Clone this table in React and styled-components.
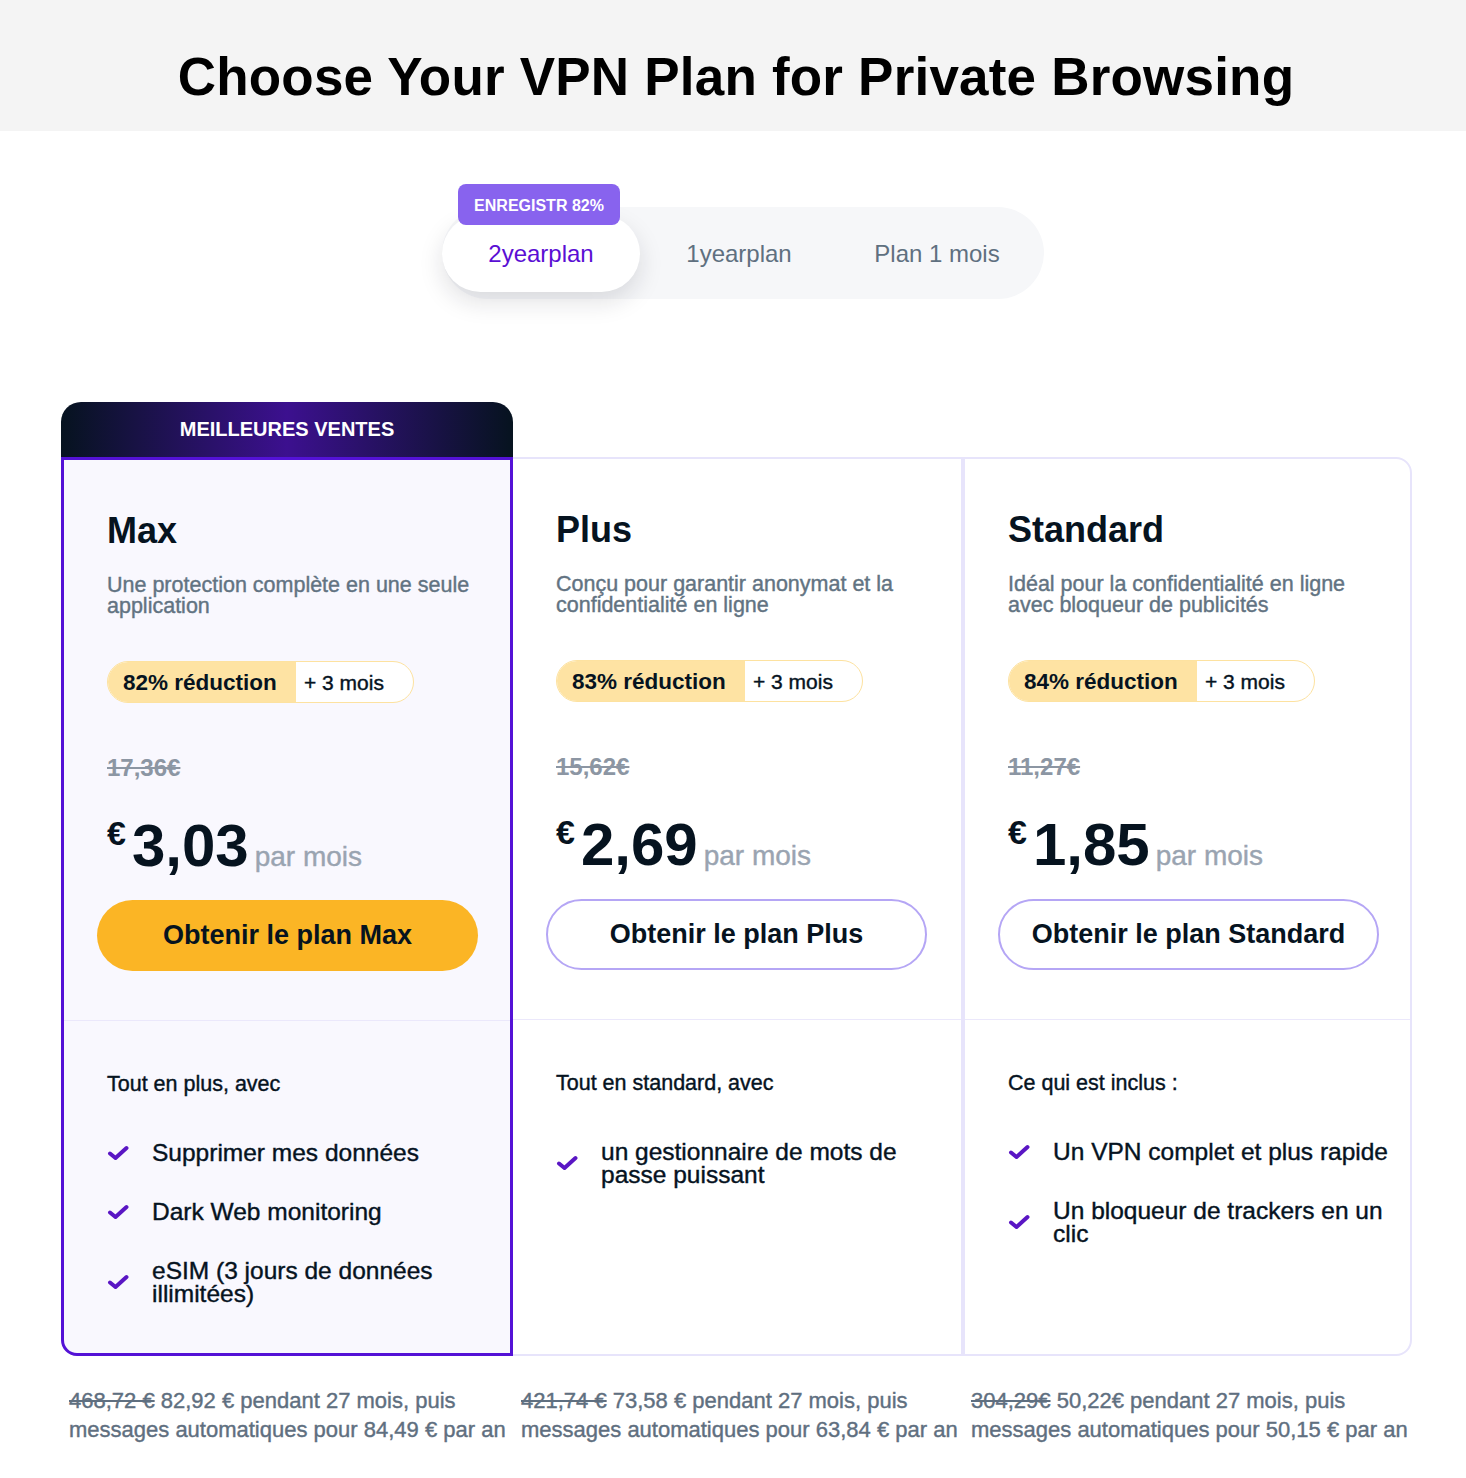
import React from "react";
import styled, { createGlobalStyle, css } from "styled-components";

const GlobalStyle = createGlobalStyle`
  body {
    margin: 0;
    background: #fff;
    font-family: "Liberation Sans", Arial, sans-serif;
    color: #06131f;
  }
`;

const medium = css`
  -webkit-text-stroke: 0.4px currentColor;
`;

const Header = styled.header`
  height: 131px;
  box-sizing: border-box;
  padding-top: 22px;
  background: #f4f4f4;
  display: flex;
  align-items: center;
  justify-content: center;
`;

const Title = styled.h1`
  margin: 0 0 0 6px;
  font-size: 53px;
  font-weight: 700;
  letter-spacing: 0.2px;
  color: #000;
`;

const TabsRow = styled.div`
  display: flex;
  justify-content: center;
  padding: 76px 0 0 20px;
`;

const Tabs = styled.div`
  display: flex;
  background: #f6f7f9;
  border-radius: 46px;
  padding: 8px 8px 7px 0;
`;

const Tab = styled.div`
  position: relative;
  width: 198px;
  height: 77px;
  border-radius: 39px;
  display: flex;
  align-items: center;
  justify-content: center;
  font-size: 24px;
  color: ${p => (p.$active ? "#5a0fd4" : "#5f7080")};
  background: ${p => (p.$active ? "#fff" : "transparent")};
  box-shadow: ${p => (p.$active ? "0 10px 24px rgba(20, 20, 40, 0.13)" : "none")};
`;

const SaveBadge = styled.span`
  position: absolute;
  top: -31px;
  left: 16px;
  width: 162px;
  height: 41px;
  padding-top: 3px;
  box-sizing: border-box;
  border-radius: 8px;
  background: #8863ee;
  color: #fff;
  font-size: 16px;
  font-weight: 700;
  display: flex;
  align-items: center;
  justify-content: center;
`;

const Plans = styled.div`
  display: grid;
  grid-template-columns: 452px 450px 449px;
  margin: 103px 0 0 61px;
`;

const Column = styled.div`
  display: flex;
  flex-direction: column;
`;

const Banner = styled.div`
  height: 55px;
  border-radius: 20px 20px 0 0;
  background: linear-gradient(90deg, #06131f 0%, #3c108f 50%, #06131f 100%);
  color: #fff;
  font-size: 20px;
  font-weight: 700;
  display: flex;
  align-items: center;
  justify-content: center;
`;

const BannerSpace = styled.div`
  height: 55px;
`;

const Card = styled.div`
  box-sizing: border-box;
  height: 899px;
  display: flex;
  flex-direction: column;
  background: ${p => (p.$featured ? "#f9f8fe" : "#fff")};
  ${p =>
    p.$featured
      ? css`
          border: 3px solid #5412d6;
          border-radius: 0 0 0 16px;
        `
      : p.$last
      ? css`
          border: 2px solid #e7e4fb;
          border-radius: 0 16px 16px 0;
        `
      : css`
          border: 2px solid #e7e4fb;
          border-left: none;
        `}
`;

const Top = styled.div`
  box-sizing: border-box;
  height: 561px;
  border-bottom: 1px solid #ebe8fb;
  padding: 53px 30px 0 43px;
  display: flex;
  flex-direction: column;
  align-items: flex-start;
`;

const Name = styled.h2`
  margin: 0;
  font-size: 36px;
  line-height: 1;
  font-weight: 700;
  color: #06131f;
`;

const Desc = styled.p`
  ${medium};
  margin: 26px 0 0;
  font-size: 21.5px;
  line-height: 21px;
  color: #627382;
`;

const Discount = styled.div`
  margin-top: 44px;
  height: 42px;
  box-sizing: border-box;
  display: flex;
  border: 1px solid #fde2a0;
  border-radius: 21px;
  overflow: hidden;
  background: #fff;
`;

const DiscountMain = styled.span`
  width: 188px;
  background: #fee3a3;
  font-size: 22.5px;
  font-weight: 700;
  display: flex;
  align-items: center;
  padding: 1px 0 0 15px;
  box-sizing: border-box;
`;

const DiscountExtra = styled.span`
  ${medium};
  width: 117px;
  font-size: 21px;
  display: flex;
  align-items: center;
  padding: 1px 0 0 8px;
  box-sizing: border-box;
`;

const OldPrice = styled.s`
  margin-top: 53px;
  font-size: 24px;
  line-height: 1;
  font-weight: 700;
  color: #8c96a3;
`;

const PriceRow = styled.div`
  margin-top: 36px;
  display: flex;
  align-items: baseline;
`;

const Currency = styled.span`
  align-self: flex-start;
  font-size: 34px;
  line-height: 1;
  font-weight: 700;
  margin: 0 6px 0 0;
`;

const Amount = styled.span`
  font-size: 60px;
  line-height: 1;
  font-weight: 700;
`;

const PerMonth = styled.span`
  ${medium};
  margin-left: 6px;
  font-size: 28px;
  color: #9aa4b1;
`;

const Cta = styled.button`
  margin: 24px 0 0 -10px;
  width: 381px;
  height: 71px;
  border-radius: 36px;
  font-family: inherit;
  font-size: 27px;
  font-weight: 700;
  color: #06131f;
  cursor: pointer;
  background: ${p => (p.$primary ? "#fbb525" : "#fff")};
  border: ${p => (p.$primary ? "none" : "2px solid #b5a6f5")};
`;

const Features = styled.div`
  padding: 50px 10px 0 43px;
`;

const FeatureIntro = styled.p`
  ${medium};
  margin: 0;
  font-size: 21.5px;
  line-height: 26px;
`;

const FeatureList = styled.ul`
  list-style: none;
  margin: 44px 0 0;
  padding: 0;
  display: flex;
  flex-direction: column;
  gap: 36px;
`;

const FeatureItem = styled.li`
  ${medium};
  display: flex;
  align-items: center;
  gap: 23px;
  font-size: 24.5px;
  line-height: 23px;
`;

const Check = styled.svg`
  flex: none;
  width: 22px;
  height: 16px;
`;

const Notes = styled.div`
  display: grid;
  grid-template-columns: 452px 450px 449px;
  margin: 30px 0 30px 61px;
`;

const Note = styled.div`
  ${medium};
  padding-left: 8px;
  font-size: 22px;
  line-height: 29px;
  color: #5f6f80;
  white-space: nowrap;
`;

const plans = [
  {
    name: "Max",
    desc: "Une protection complète en une seule application",
    discount: "82% réduction",
    old: "17,36€",
    price: "3,03",
    intro: "Tout en plus, avec",
    features: ["Supprimer mes données", "Dark Web monitoring", "eSIM (3 jours de données illimitées)"],
    noteOld: "468,72 €",
    noteNew: "82,92 €",
    renew: "84,49 €",
    featured: true,
  },
  {
    name: "Plus",
    desc: "Conçu pour garantir anonymat et la confidentialité en ligne",
    discount: "83% réduction",
    old: "15,62€",
    price: "2,69",
    intro: "Tout en standard, avec",
    features: ["un gestionnaire de mots de passe puissant"],
    noteOld: "421,74 €",
    noteNew: "73,58 €",
    renew: "63,84 €",
  },
  {
    name: "Standard",
    desc: "Idéal pour la confidentialité en ligne avec bloqueur de publicités",
    discount: "84% réduction",
    old: "11,27€",
    price: "1,85",
    intro: "Ce qui est inclus :",
    features: ["Un VPN complet et plus rapide", "Un bloqueur de trackers en un clic"],
    noteOld: "304,29€",
    noteNew: "50,22€",
    renew: "50,15 €",
    last: true,
  },
];

function CheckIcon() {
  return (
    <Check viewBox="0 0 22 16">
      <path d="M3 8.5 L8.5 13 L19.5 3" fill="none" stroke="#5a16c4" strokeWidth="4" strokeLinecap="round" strokeLinejoin="round" />
    </Check>
  );
}

function PlanCard({ plan }) {
  return (
    <Column>
      {plan.featured ? <Banner>MEILLEURES VENTES</Banner> : <BannerSpace />}
      <Card $featured={plan.featured} $last={plan.last}>
        <Top>
          <Name>{plan.name}</Name>
          <Desc>{plan.desc}</Desc>
          <Discount>
            <DiscountMain>{plan.discount}</DiscountMain>
            <DiscountExtra>+ 3 mois</DiscountExtra>
          </Discount>
          <OldPrice>{plan.old}</OldPrice>
          <PriceRow>
            <Currency>€</Currency>
            <Amount>{plan.price}</Amount>
            <PerMonth>par mois</PerMonth>
          </PriceRow>
          <Cta $primary={plan.featured}>Obtenir le plan {plan.name}</Cta>
        </Top>
        <Features>
          <FeatureIntro>{plan.intro}</FeatureIntro>
          <FeatureList>
            {plan.features.map(f => (
              <FeatureItem key={f}>
                <CheckIcon />
                <span>{f}</span>
              </FeatureItem>
            ))}
          </FeatureList>
        </Features>
      </Card>
    </Column>
  );
}

export default function App() {
  return (
    <>
      <GlobalStyle />
      <Header>
        <Title>Choose Your VPN Plan for Private Browsing</Title>
      </Header>
      <TabsRow>
        <Tabs>
          <Tab $active>
            <SaveBadge>ENREGISTR 82%</SaveBadge>
            2yearplan
          </Tab>
          <Tab>1yearplan</Tab>
          <Tab>Plan 1 mois</Tab>
        </Tabs>
      </TabsRow>
      <Plans>
        {plans.map(p => (
          <PlanCard key={p.name} plan={p} />
        ))}
      </Plans>
      <Notes>
        {plans.map(p => (
          <Note key={p.name}>
            <s>{p.noteOld}</s> {p.noteNew} pendant 27 mois, puis
            <br />
            messages automatiques pour {p.renew} par an
          </Note>
        ))}
      </Notes>
    </>
  );
}
